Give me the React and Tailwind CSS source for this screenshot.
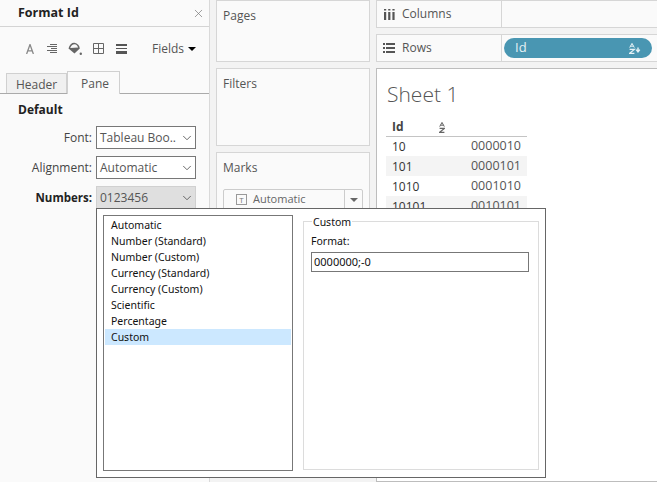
import React from 'react';
import { X, ChevronDown } from 'lucide-react';

const sans = 'font-["Open_Sans",sans-serif]';
const dialogFont = 'font-["Noto_Sans",sans-serif]';

const formats = [
  'Automatic',
  'Number (Standard)',
  'Number (Custom)',
  'Currency (Standard)',
  'Currency (Custom)',
  'Scientific',
  'Percentage',
  'Custom',
];

const rows = [
  ['10', '0000010', false],
  ['101', '0000101', true],
  ['1010', '0001010', false],
  ['10101', '0010101', true],
];

const SortAZ = ({ arrow = false, color = '#666' }) => (
  <svg width={arrow ? 12 : 6} height="11" viewBox={arrow ? '0 0 12 11' : '0 0 6 11'} fill="none">
    <path d="M0.7 4.6 L3 0.4 L5.3 4.6 M1.5 3.2 H4.5" stroke={color} strokeWidth="1" />
    <path d="M0.6 6.4 H5.4 L0.6 10.3 H5.4" stroke={color} strokeWidth="1.2" />
    {arrow && <path d="M9 4.5 V8 M7.2 6.6 L9 8.8 L10.8 6.6" stroke={color} strokeWidth="1.4" />}
  </svg>
);

const Select = ({ label, value, bold, grey }) => (
  <div className="flex items-center h-[23px] mb-[7px]">
    <span className={`w-[96px] text-right pr-[4px] ${bold ? 'text-[11.5px] font-bold text-[#222]' : 'text-[12px] text-[#444]'}`}>{label}</span>
    <div className={`flex items-center justify-between w-[100px] h-[23px] border ${grey ? 'border-[#d0d0d0] bg-[#dfdfdf]' : 'border-[#777] bg-white'} pl-[3px] pr-[1px]`}>
      <span className="text-[12px] text-[#555] whitespace-nowrap">{value}</span>
      <ChevronDown size={14} strokeWidth={1.5} className="text-[#555] shrink-0" />
    </div>
  </div>
);

const Toolbar = () => (
  <div className="flex items-center h-[45px] pl-[26px] pr-[13px]">
    <svg width="8" height="10" viewBox="0 0 8 10" fill="none" className="mr-[13px]">
      <path d="M0.6 10 L4 0.5 L7.4 10 M1.8 6.8 H6.2" stroke="#888" strokeWidth="1.3" />
    </svg>
    <svg width="10" height="10" viewBox="0 0 10 10" fill="none" className="mr-[11px]">
      <path d="M3 0.5 H10 M0 2.5 H10 M4 4.5 H10 M0 6.5 H10 M3 8.5 H10" stroke="#666" strokeWidth="1" />
    </svg>
    <svg width="14" height="14" viewBox="0 0 14 14" className="mr-[11px]">
      <path d="M0.5 6.5 C1.5 2.5 4 0.5 6.5 0.8 C9.5 1.2 11.5 3.5 11.8 6.5 L6.5 11.5 Z" fill="#666" />
      <path d="M2.2 6 C3 3.8 4.6 2.2 6.5 2.2 C8.4 2.4 9.6 3.8 10.2 5.6 Z" fill="#fafafa" />
      <circle cx="12.8" cy="11.8" r="1.2" fill="#666" />
    </svg>
    <svg width="11" height="11" viewBox="0 0 11 11" fill="none" className="mr-[12px]">
      <path d="M0.5 0.5 H10.5 V10.5 H0.5 Z M5.5 0.5 V10.5 M0.5 5.5 H10.5" stroke="#666" strokeWidth="1" />
    </svg>
    <svg width="11" height="10" viewBox="0 0 11 10" className="mr-auto">
      <rect y="0" width="11" height="2" fill="#555" />
      <rect y="4" width="11" height="1" fill="#555" />
      <rect y="7" width="11" height="3" fill="#555" />
    </svg>
    <span className="text-[12px] text-[#555]">Fields</span>
    <span className="ml-[4px] w-0 h-0 border-x-[4px] border-x-transparent border-t-[4px] border-t-black" />
  </div>
);

const FormatPane = () => (
  <div className="w-[210px] shrink-0 bg-[#fafafa] border-r border-[#d9d9d9] h-full">
    <div className="flex items-center justify-between h-[27px] pl-[18px] pr-[4px] border-b border-[#d4d4d4]">
      <span className="pt-px text-[12.5px] font-bold text-[#222]">Format Id</span>
      <X size={13} strokeWidth={1.3} className="text-[#777]" />
    </div>
    <div className="-mt-px">
      <Toolbar />
    </div>
    <div className="flex items-end h-[23px] pl-[6px] border-b border-[#aaa]">
      <div className="h-[20px] w-[61px] text-center bg-[#f0f0f0] border border-b-0 border-[#d0d0d0] text-[12px] text-[#555] leading-[21px]">Header</div>
      <div className="h-[23px] w-[53px] pl-[3px] text-center -mb-px bg-[#fafafa] border border-b-0 border-[#d0d0d0] text-[12px] text-[#555] leading-[23px]">Pane</div>
    </div>
    <div className="pl-[18px] pt-[6px] h-[32px] text-[12px] font-bold text-[#222] leading-[20px]">Default</div>
    <Select label="Font:" value="Tableau Boo.." />
    <Select label="Alignment:" value="Automatic" />
    <Select label="Numbers:" value="0123456" bold grey />
  </div>
);

const Card = ({ title, h, children }) => (
  <div className={`border border-[#d6d6d6] bg-[#fafafa] px-[6px] ${h}`}>
    <div className="text-[12px] text-[#555] leading-[16px] pt-[7px]">{title}</div>
    {children}
  </div>
);

const Shelves = () => (
  <div className="w-[154px] shrink-0 ml-[6px] flex flex-col gap-[6px]">
    <Card title="Pages" h="h-[62px]" />
    <Card title="Filters" h="h-[78px]" />
    <Card title="Marks" h="h-[150px]">
      <div className="mt-[13px] flex items-center h-[21px] border border-[#ccc] rounded-[2px] bg-[#fafafa]">
        <div className="flex-1 flex items-center pl-[12px] gap-[6px] text-[11px] text-[#666]">
          <span className="w-[11px] h-[11px] border border-[#999] text-[8px] leading-[9px] text-center text-[#777]">T</span>
          Automatic
        </div>
        <div className="w-[18px] h-full border-l border-[#ccc] flex items-center justify-center">
          <span className="w-0 h-0 border-x-[4px] border-x-transparent border-t-[4px] border-t-[#666]" />
        </div>
      </div>
    </Card>
  </div>
);

const Shelf = ({ icon, label, children }) => (
  <div className="flex h-[28px] border border-[#d6d6d6] border-r-0 bg-[#fafafa]">
    <div className="w-[125px] shrink-0 flex items-center border-r border-[#d6d6d6] text-[12px] text-[#555]">
      {icon}
      {label}
    </div>
    <div className="flex-1 flex items-center pl-[2px]">{children}</div>
  </div>
);

const ColumnsIcon = () => (
  <svg width="11" height="11" viewBox="0 0 11 11" className="ml-[7px] mr-[7px]">
    <path d="M0 3 H2.2 V11 H0 Z M4.2 3 H6.4 V11 H4.2 Z M8.4 3 H10.6 V11 H8.4 Z M0 0 H2.2 V1.6 H0 Z M4.2 0 H6.4 V1.6 H4.2 Z M8.4 0 H10.6 V1.6 H8.4 Z" fill="#555" />
  </svg>
);

const RowsIcon = () => (
  <svg width="12" height="10" viewBox="0 0 12 10" className="ml-[6px] mr-[7px]">
    <path d="M0 0 H2 V2 H0 Z M3 0 H12 V2 H3 Z M0 4 H2 V6 H0 Z M3 4 H12 V6 H3 Z M0 8 H2 V10 H0 Z M3 8 H12 V10 H3 Z" fill="#555" />
  </svg>
);

const Sheet = () => (
  <div className="flex-1 min-w-0 ml-[6px] flex flex-col gap-[6px]">
    <Shelf icon={<ColumnsIcon />} label="Columns" />
    <Shelf icon={<RowsIcon />} label="Rows">
      <div className="w-[148px] h-[20px] rounded-full bg-[#4996b2] flex items-center justify-between pl-[11px] pr-[11px] text-[13px] text-[#e4f1f5]">
        Id
        <SortAZ arrow color="#e6f2f6" />
      </div>
    </Shelf>
    <div className="flex-1 bg-white border border-r-0 border-[#bdbdbd] pl-[9px] pt-[11px]">
      <div className="pl-[1px] text-[21px] text-[#555] font-light leading-[28px]">Sheet 1</div>
      <div className="w-[141px] mt-[7px]">
        <div className="flex items-center h-[22px] pt-[3px] -mb-px border-b border-[#c4c4c4] pl-[6px] text-[12px] font-bold text-[#444]">
          <span className="w-[47px]">Id</span>
          <SortAZ />
        </div>
        {rows.map(([id, value, shaded]) => (
          <div key={id} className={`flex items-center justify-between h-[20px] pl-[6px] pr-[6px] ${shaded ? 'bg-[#f4f4f4]' : ''}`}>
            <span className="pt-px text-[12px] text-[#333]">{id}</span>
            <span className="text-[12.5px] text-[#555]">{value}</span>
          </div>
        ))}
      </div>
    </div>
  </div>
);

const FormatPopup = () => (
  <div className={`absolute left-[96px] top-[208px] w-[450px] h-[270px] border border-[#666] bg-white p-[6px] flex text-[10.5px] text-[#111] ${dialogFont}`}>
    <div className="w-[190px] h-[256px] shrink-0 border border-[#777] p-[1px]">
      {formats.map((f) => (
        <div key={f} className={`h-[16px] leading-[16px] pl-[6px] ${f === 'Custom' ? 'bg-[#cce8ff]' : ''}`}>{f}</div>
      ))}
    </div>
    <div className="relative ml-[10px] mt-[6px] w-[236px] h-[249px] border border-[#dcdcdc] px-[7px] pt-[11px]">
      <span className="absolute left-[8px] -top-[8px] bg-white px-[1px] leading-[16px]">Custom</span>
      <div className="leading-[16px] mb-[3px]">Format:</div>
      <div className="w-[218px] h-[20px] border border-[#777] pl-[2px] leading-[18px] text-[11px]">0000000;-0</div>
    </div>
  </div>
);

export default function App() {
  return (
    <div className={`relative flex w-[657px] h-[482px] overflow-hidden bg-[#f3f3f3] ${sans}`}>
      <FormatPane />
      <Shelves />
      <Sheet />
      <FormatPopup />
    </div>
  );
}
